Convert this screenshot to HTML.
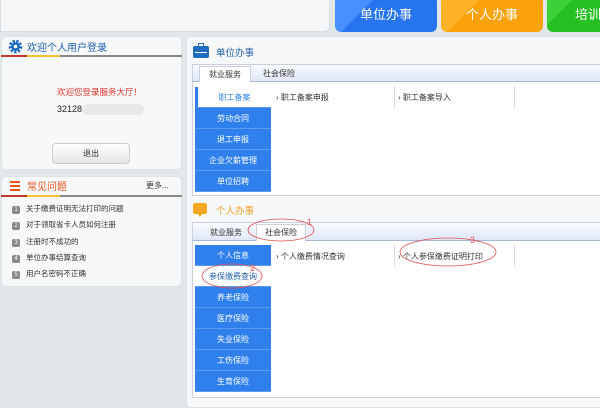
<!DOCTYPE html>
<html><head><meta charset="utf-8"><style>
*{margin:0;padding:0;box-sizing:border-box}
body{width:600px;height:404px;overflow:hidden;position:relative;background:#e2e8ea;font-family:"Liberation Sans","Noto Sans CJK SC",sans-serif;font-size:8px;color:#333}
.a{position:absolute}
.btn{position:absolute;top:-4px;height:36px;border-radius:6px;color:#fff;font-size:13px;text-align:center;line-height:38px}
.menu div{height:21px;line-height:21px;text-align:center;color:#fff;background:#2f80ed;border-bottom:1px solid #5a9af0;font-size:8px}
.menu div.w{background:#fff;color:#2f80ed;border-left:3px solid #2f80ed}
.tabbar{background:linear-gradient(#f8faff,#dfe7f8);border:1px solid #c9d0da;border-bottom:1px solid #a9b8d8}
.tab{position:absolute;height:17px;line-height:16px;text-align:center;font-size:8px;color:#333}
.tab.on{background:#fff;border:1px solid #c9d0da;border-bottom:none}
.sep{position:absolute;width:1px;background:#ddd}
</style></head><body>
<div class="a" style="left:0;top:-4px;width:330px;height:36px;background:#f5f7f8;border-radius:0 0 6px 0;border:1px solid #d8dee2"></div>
<div class="btn" style="left:335px;width:102px;background:linear-gradient(135deg,#4690ff 30%,#2674ee 31%)">单位办事</div>
<div class="btn" style="left:441px;width:102px;background:linear-gradient(135deg,#ffb225 30%,#fba20a 31%)">个人办事</div>
<div class="btn" style="left:547px;width:60px;background:linear-gradient(135deg,#3ed03a 30%,#27c023 31%);text-align:left;padding-left:28px">培训</div>

<div class="a" style="left:1px;top:36px;width:181px;height:134px;background:#f6f8f9;border:1px solid #e0e4e6;border-radius:5px"></div>
<svg class="a" style="left:8px;top:39px" width="15" height="15" viewBox="0 0 16 16"><circle cx="8" cy="8" r="5.5" fill="none" stroke="#1565c0" stroke-width="3.5" stroke-dasharray="2.2 1.6"/><circle cx="8" cy="8" r="4.5" fill="#1565c0"/><circle cx="8" cy="8" r="2" fill="#f6f8f9"/></svg>
<div class="a" style="left:27px;top:39px;font-size:10px;color:#1f5fa8">欢迎个人用户登录</div>
<div class="a" style="left:1px;top:55px;width:181px;height:2px;background:#888"></div>
<div class="a" style="left:1px;top:55px;width:26px;height:2px;background:#c0392b"></div>
<div class="a" style="left:27px;top:55px;width:33px;height:2px;background:#f2c230"></div>
<div class="a" style="left:57px;top:86px;font-size:8.5px;color:#e0342a">欢迎您登录服务大厅！</div>
<div class="a" style="left:57px;top:104px;font-size:9px;color:#222">32128</div>
<div class="a" style="left:82px;top:104px;width:62px;height:11px;border-radius:6px;background:#e6e8e9"></div>
<div class="a" style="left:52px;top:143px;width:78px;height:21px;border:1px solid #ccc;border-radius:4px;background:linear-gradient(#fff,#e6e6e6);text-align:center;line-height:19px;font-size:8px">退出</div>

<div class="a" style="left:1px;top:176px;width:181px;height:111px;background:#f6f8f9;border:1px solid #e0e4e6;border-radius:5px"></div>
<div class="a" style="left:10px;top:181px;width:10px;height:10px;background:repeating-linear-gradient(#e8531c 0 2px,transparent 2px 4px)"></div>
<div class="a" style="left:27px;top:178px;font-size:10px;color:#e8531c">常见问题</div>
<div class="a" style="left:146px;top:180px;font-size:8px;color:#333">更多...</div>
<div class="a" style="left:1px;top:195px;width:181px;height:2px;background:#888"></div>
<div class="a" style="left:1px;top:195px;width:26px;height:2px;background:#c0392b"></div>
<div class="a" style="left:27px;top:195px;width:33px;height:2px;background:#f2c230"></div>
<div class="a" style="left:12px;top:201px;line-height:16.3px;font-size:7.5px;color:#333">
<div><span style="display:inline-block;width:8px;height:8px;border-radius:2px;background:#888;color:#fff;font-size:6px;text-align:center;line-height:8px;margin-right:6px">1</span>关于缴费证明无法打印的问题</div>
<div><span style="display:inline-block;width:8px;height:8px;border-radius:2px;background:#888;color:#fff;font-size:6px;text-align:center;line-height:8px;margin-right:6px">2</span>对于领取省卡人员如何注册</div>
<div><span style="display:inline-block;width:8px;height:8px;border-radius:2px;background:#888;color:#fff;font-size:6px;text-align:center;line-height:8px;margin-right:6px">3</span>注册时不成功的</div>
<div><span style="display:inline-block;width:8px;height:8px;border-radius:2px;background:#888;color:#fff;font-size:6px;text-align:center;line-height:8px;margin-right:6px">4</span>单位办事结算查询</div>
<div><span style="display:inline-block;width:8px;height:8px;border-radius:2px;background:#888;color:#fff;font-size:6px;text-align:center;line-height:8px;margin-right:6px">5</span>用户名密码不正确</div>
</div>

<div class="a" style="left:186px;top:36px;width:420px;height:372px;background:#f6f8f9;border:1px solid #dde2e5;border-radius:5px"></div>
<div class="a" style="left:193px;top:46px;width:16px;height:12px;background:#1f6cc0;border-radius:2px"></div>
<div class="a" style="left:198px;top:43px;width:6px;height:4px;border:1.5px solid #1f6cc0;border-bottom:none"></div>
<div class="a" style="left:195px;top:52px;width:12px;height:1px;background:#fff"></div>
<div class="a" style="left:216px;top:45px;font-size:9.5px;color:#1f5fa8">单位办事</div>
<div class="a tabbar" style="left:192px;top:64px;width:410px;height:18px"></div>
<div class="tab on" style="left:199px;top:66px;width:52px">就业服务</div>
<div class="tab" style="left:254px;top:66px;width:50px">社会保险</div>
<div class="a" style="left:192px;top:82px;width:410px;height:114px;background:#fff;border-left:1px solid #c9d0da;border-bottom:1px solid #d0d0d0"></div>
<div class="a menu" style="left:195px;top:87px;width:76px">
<div class="w">职工备案</div><div>劳动合同</div><div>退工申报</div><div>企业欠薪管理</div><div>单位招聘</div></div>
<div class="a" style="left:276px;top:92px">›&nbsp;职工备案申报</div>
<div class="sep" style="left:394px;top:86px;height:22px"></div>
<div class="a" style="left:398px;top:92px">›&nbsp;职工备案导入</div>
<div class="sep" style="left:514px;top:86px;height:22px"></div>

<div class="a" style="left:193px;top:203px;width:14px;height:11px;background:#f5a623;border-radius:2px"></div>
<div class="a" style="left:197px;top:213px;width:0;height:0;border-left:3px solid transparent;border-right:3px solid transparent;border-top:4px solid #f5a623"></div>
<div class="a" style="left:216px;top:203px;font-size:9.5px;color:#f0a020">个人办事</div>
<div class="a tabbar" style="left:192px;top:222px;width:410px;height:19px"></div>
<div class="tab" style="left:200px;top:225px;width:52px">就业服务</div>
<div class="tab on" style="left:256px;top:224px;width:50px;height:18px">社会保险</div>
<div class="a" style="left:192px;top:241px;width:410px;height:157px;background:#fff;border-left:1px solid #c9d0da;border-bottom:1px solid #d0d0d0"></div>
<div class="a menu" style="left:195px;top:245px;width:76px">
<div>个人信息</div><div class="w" style="border-left:none;color:#1f5fa8">参保缴费查询</div><div>养老保险</div><div>医疗保险</div><div>失业保险</div><div>工伤保险</div><div>生育保险</div></div>
<div class="a" style="left:276px;top:251px">›&nbsp;个人缴费情况查询</div>
<div class="sep" style="left:394px;top:244px;height:22px"></div>
<div class="a" style="left:398px;top:251px">›&nbsp;个人参保缴费证明打印</div>
<div class="sep" style="left:514px;top:244px;height:22px"></div>

<svg class="a" style="left:0;top:0" width="600" height="404">
<ellipse cx="281" cy="230" rx="33" ry="11" fill="none" stroke="#e05050" stroke-width="0.8"/>
<text x="307" y="225" font-size="9" fill="#e05050" font-family="Liberation Sans">1</text>
<ellipse cx="232" cy="276" rx="30" ry="12" fill="none" stroke="#e05050" stroke-width="0.8"/>
<text x="250" y="271" font-size="9" fill="#e05050" font-family="Liberation Sans">2</text>
<ellipse cx="448" cy="252" rx="48" ry="14" fill="none" stroke="#e05050" stroke-width="0.8"/>
<text x="470" y="243" font-size="9" fill="#e05050" font-family="Liberation Sans">3</text>
</svg>
</body></html>
